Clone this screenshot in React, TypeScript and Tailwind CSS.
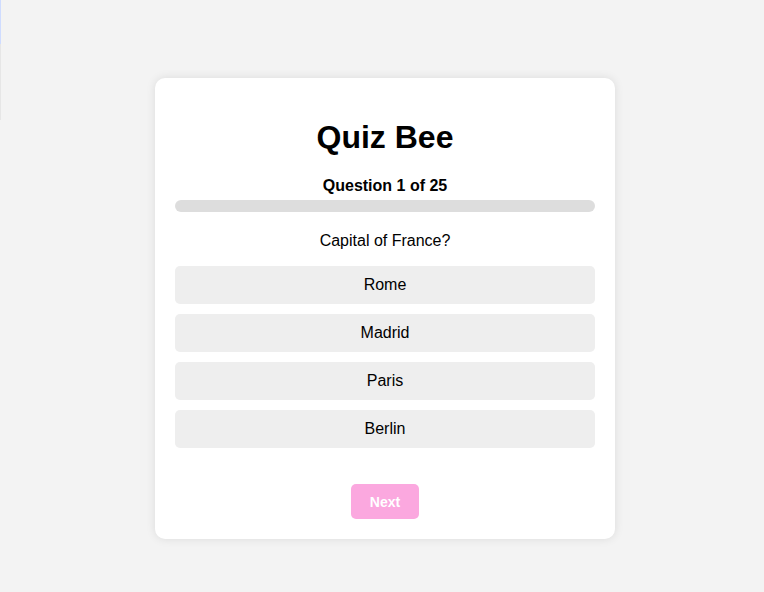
import React from "react";

export default function App() {
  const options = ["Rome", "Madrid", "Paris", "Berlin"];
  return (
    <div
      className="relative w-full h-[592px] bg-[#f3f3f3] flex justify-center items-start pt-[78px] pl-[6px] text-black"
      style={{ fontFamily: '"Liberation Sans", Arial, sans-serif' }}
    >
      <div className="absolute left-0 top-0 w-px h-[44px] bg-[#cfdcff]" />
      <div className="absolute left-0 top-[44px] w-px h-[76px] bg-[#e6e6e6]" />
      <div className="w-[460px] bg-white rounded-[10px] shadow-[0_0_10px_rgba(0,0,0,0.1)] px-5 pt-5 pb-5 flex flex-col items-center">
        <h1 className="mt-[21px] text-[32px] leading-[37px] font-bold">Quiz Bee</h1>
        <div className="mt-[21px] text-base leading-[18px] font-bold">Question 1 of 25</div>
        <div className="mt-[5px] w-full h-3 rounded-full bg-[#dddddd]" />
        <p className="mt-[20px] text-base leading-[18px]">Capital of France?</p>
        <div className="mt-[16px] w-full flex flex-col gap-[10px]">
          {options.map((o) => (
            <button
              key={o}
              className="w-full h-[38px] rounded-[5px] bg-[#eeeeee] text-base text-black"
            >
              {o}
            </button>
          ))}
        </div>
        <button className="mt-9 w-[68px] h-[35px] rounded-[5px] bg-[#fba8df] text-white text-sm font-bold">
          Next
        </button>
      </div>
    </div>
  );
}
